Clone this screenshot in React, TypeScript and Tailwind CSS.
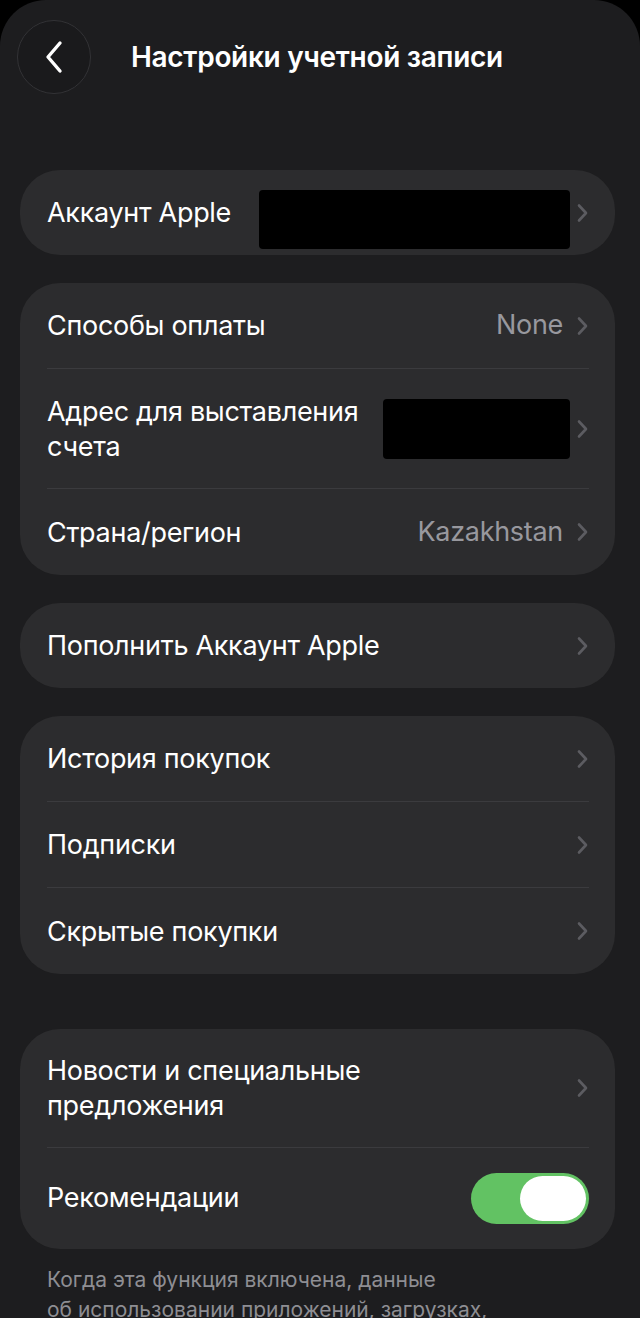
import React, { useState } from "react";

const font = { fontFamily: "Inter, 'Noto Sans', sans-serif" };

const Chevron = () => (
  <svg width="13" height="20" viewBox="0 0 13 20" fill="none" className="shrink-0">
    <path d="M3 2.5 L10 10 L3 17.5" stroke="#5c5c61" strokeWidth="2.6" strokeLinecap="round" strokeLinejoin="round" />
  </svg>
);

const Divider = () => <div className="ml-[27px] mr-[26px] h-px bg-[#3b3b3e]" />;

type RowProps = {
  label: React.ReactNode;
  value?: string;
  redact?: string;
  height: string;
};

const Row: React.FC<RowProps> = ({ label, value, redact, height }) => (
  <div className={`flex items-center pl-[27px] pr-[26px] ${height}`}>
    <div className="flex-1 text-[27px] leading-[35px] text-white tracking-[-0.3px]">{label}</div>
    {value && <span className="mr-[13px] text-[27px] text-[#98989e] tracking-[-0.3px]">{value}</span>}
    {redact && <div className={`mr-[6px] rounded-[4px] bg-black ${redact}`} />}
    <Chevron />
  </div>
);

const Card: React.FC<{ children: React.ReactNode }> = ({ children }) => (
  <div className="ml-[20px] mr-[25px] overflow-hidden rounded-[40px] bg-[#2c2c2e]">{children}</div>
);

export default function App() {
  const [recs, setRecs] = useState(true);

  return (
    <div className="min-h-[1318px] bg-black" style={font}>
      <div className="h-[1318px] overflow-hidden rounded-t-[46px] bg-[#1d1d1f]">
        {/* header */}
        <div className="flex h-[116px] items-center pl-[17px] pb-[2px]">
          <button className="flex h-[74px] w-[74px] items-center justify-center rounded-full border border-[#333336] bg-[#1a1a1c]">
            <svg width="22" height="34" viewBox="0 0 22 34" fill="none">
              <path d="M17 3 L5 17 L17 31" stroke="white" strokeWidth="3.4" strokeLinecap="round" strokeLinejoin="round" />
            </svg>
          </button>
          <h1 className="ml-[40px] text-[28px] font-semibold text-white tracking-[-0.3px]">Настройки учетной записи</h1>
        </div>

        <div className="mt-[54px] flex flex-col gap-[28px]">
          <Card>
            <Row label="Аккаунт Apple" redact="mt-[14px] h-[59px] w-[311px]" height="h-[85px]" />
          </Card>

          <Card>
            <Row label="Способы оплаты" value="None" height="h-[85px]" />
            <Divider />
            <Row
              label={<>Адрес для выставления<br />счета</>}
              redact="h-[60px] w-[187px]"
              height="h-[119px]"
            />
            <Divider />
            <Row label="Страна/регион" value="Kazakhstan" height="h-[86px]" />
          </Card>

          <Card>
            <Row label="Пополнить Аккаунт Apple" height="h-[85px]" />
          </Card>

          <Card>
            <Row label="История покупок" height="h-[85px]" />
            <Divider />
            <Row label="Подписки" height="h-[85px]" />
            <Divider />
            <Row label="Скрытые покупки" height="h-[86px]" />
          </Card>
        </div>

        <div className="mt-[55px]">
          <Card>
            <Row label={<>Новости и специальные<br />предложения</>} height="h-[118px]" />
            <Divider />
            <div className="flex h-[101px] items-center pl-[27px] pr-[26px]">
              <div className="flex-1 text-[27px] text-white tracking-[-0.3px]">Рекомендации</div>
              <button
                onClick={() => setRecs(!recs)}
                className={`flex h-[51px] w-[118px] items-center rounded-full px-[3px] ${recs ? "justify-end bg-[#62c263]" : "justify-start bg-[#3a3a3c]"}`}
              >
                <span className="h-[45px] w-[66px] rounded-full bg-white" />
              </button>
            </div>
          </Card>
        </div>

        <p className="mt-[16px] px-[47px] text-[21px] leading-[30px] text-[#8e8e93]">
          Когда эта функция включена, данные
          <br />
          об использовании приложений, загрузках,
        </p>
      </div>
    </div>
  );
}
